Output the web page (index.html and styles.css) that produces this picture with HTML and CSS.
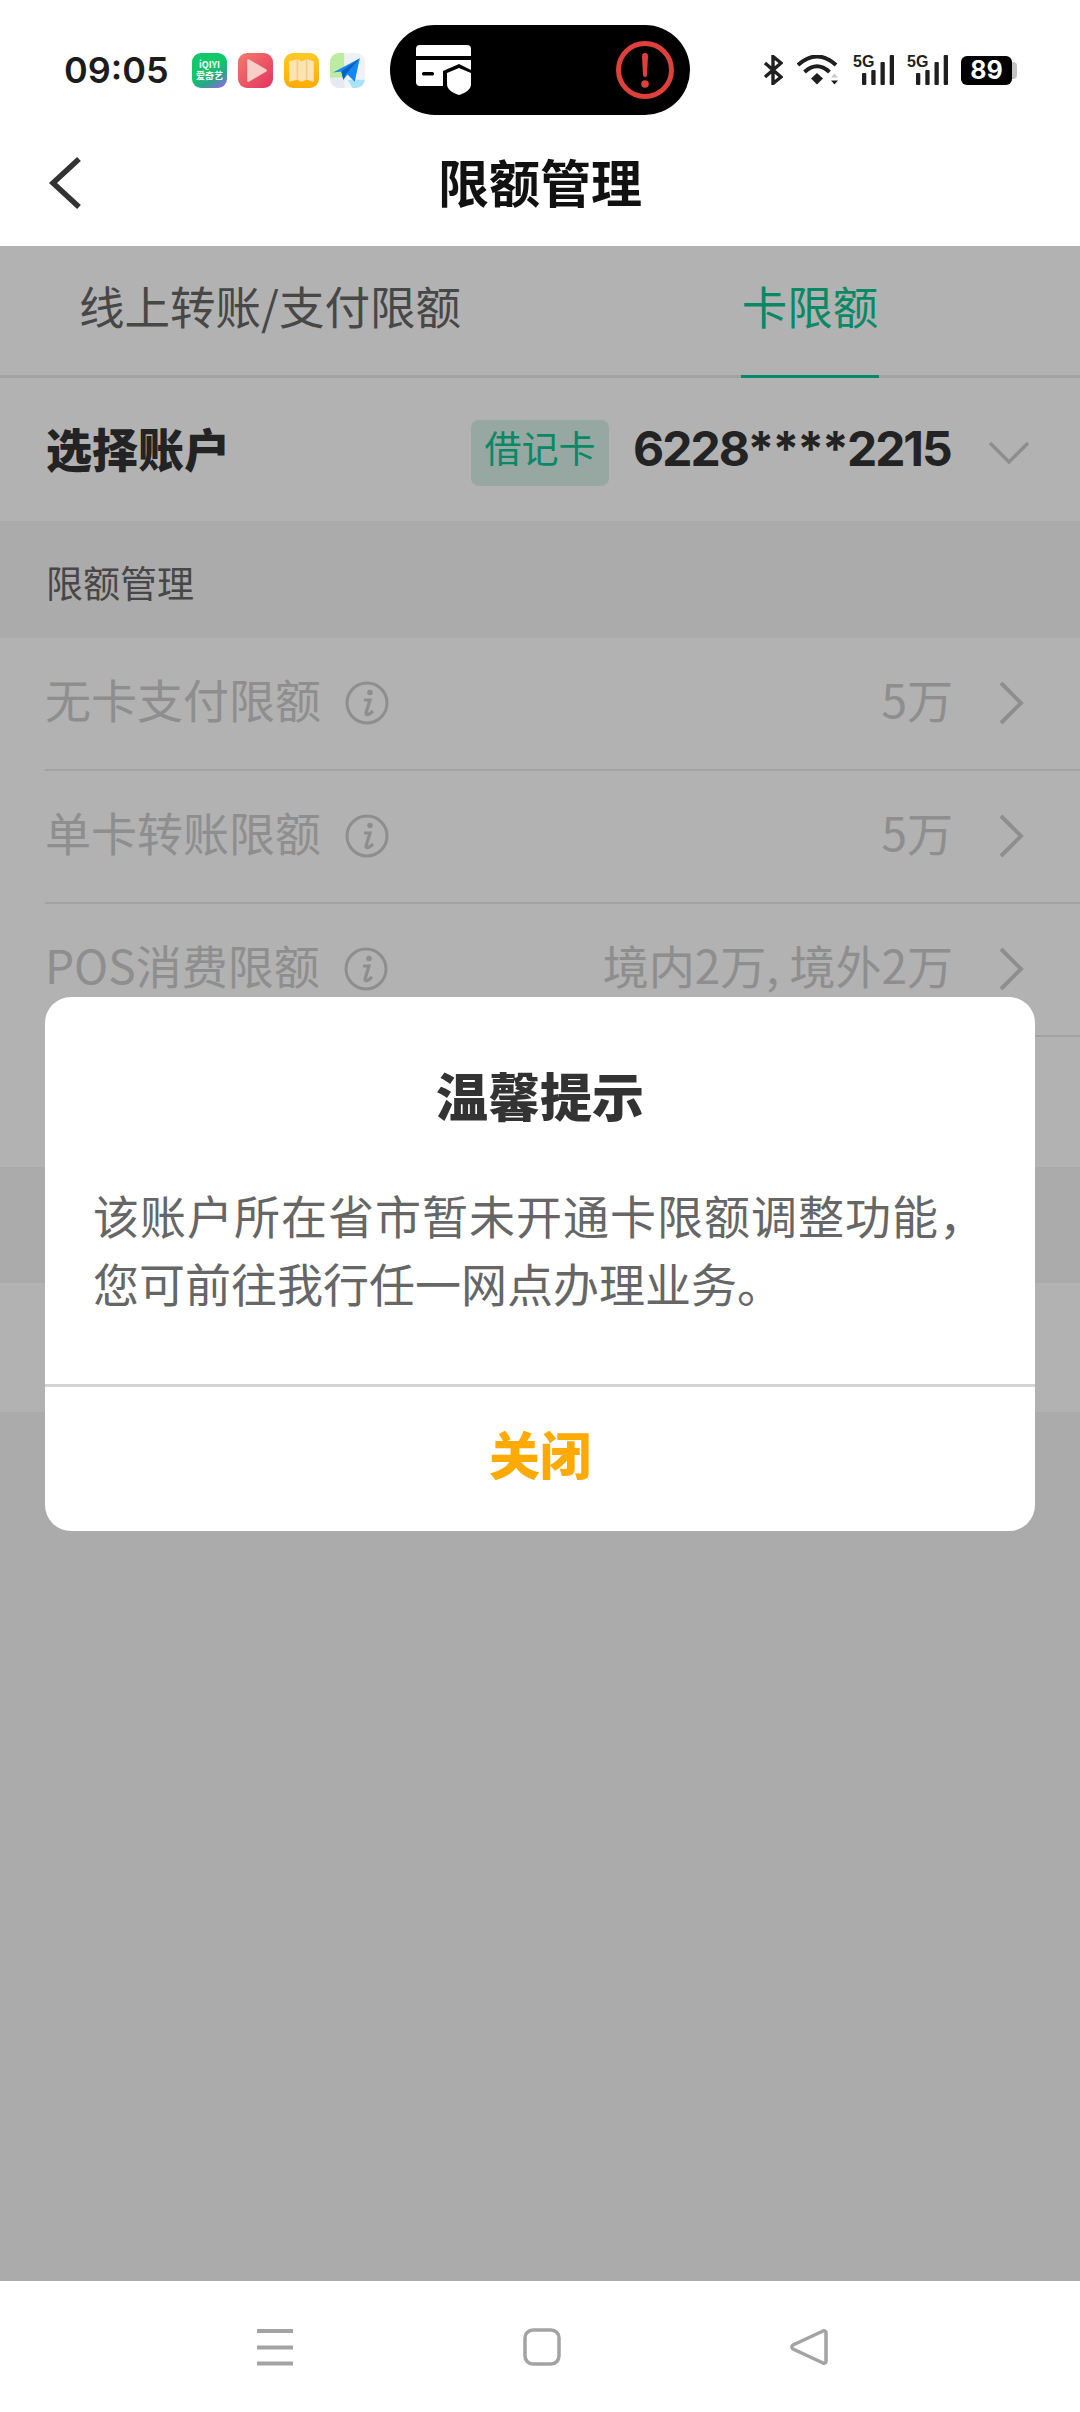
FILE: index.html
```html
<!DOCTYPE html>
<html lang="zh-CN">

<head>
    <meta charset="UTF-8">
    <meta name="viewport" content="width=device-width, initial-scale=1.0">
    <title>限额管理</title>
    <link rel="stylesheet" href="styles.css">
</head>

<body>
    <div class="phone">
        <header class="top">
            <div class="status">
                <span class="time">09:05</span>
                <div class="apps">
                    <div class="app app-iqiyi"><span>iQIYI</span><span>爱奇艺</span></div>
                    <div class="app app-video">
                        <svg viewBox="0 0 34 34"><path d="M10 7 27 17 10 27z" fill="#f8cfc8" stroke="#f8cfc8" stroke-width="2" stroke-linejoin="round"/></svg>
                    </div>
                    <div class="app app-book">
                        <svg viewBox="0 0 34 34"><path d="M5 8l8-2 4 2 5-2 7 2v20l-7-2-5 2-4-2-8 2z" fill="#fbe3b4"/><path d="M13 6v20M22 6v20" stroke="#f4cb85" stroke-width="1.500"/></svg>
                    </div>
                    <div class="app app-map">
                        <svg viewBox="0 0 34 34">
                            <path d="M0 5a5 5 0 0 1 5-5h9v24H0z" fill="#bdeb9f"/>
                            <path d="M14 0h15a5 5 0 0 1 5 5v20H14z" fill="#eef2f6"/>
                            <path d="M0 24h14v10H5a5 5 0 0 1-5-5z" fill="#e6e9f4"/>
                            <path d="M17 26h17v3a5 5 0 0 1-5 5h-7z" fill="#a9e2fb"/>
                            <path d="M3 19 29 5l-5 23-7-7-4 5-2-8z" fill="#1287f5"/>
                            <path d="M11 18 29 5 15 21l-2 5z" fill="#0b5fc0"/>
                        </svg>
                    </div>
                </div>
                <div class="pill">
                    <svg class="pill-card" viewBox="0 0 56 50">
                        <path d="M4 0h47a4 4 0 0 1 4 4v7H0V4a4 4 0 0 1 4-4z" fill="#fff"/>
                        <path d="M0 15h55v10L43 19 27 26v15H4a4 4 0 0 1-4-4z" fill="#fff"/>
                        <rect x="6" y="27" width="12" height="3.500" rx="1.500" fill="#000"/>
                        <path d="M43 23l12 5v11c0 6-6 9-12 11-6-2-12-5-12-11V28z" fill="#fff"/>
                    </svg>
                    <svg class="pill-alert" viewBox="0 0 58 58">
                        <circle cx="29" cy="29" r="26.500" fill="none" stroke="#e0403c" stroke-width="5"/>
                        <path d="M26 15a3 3 0 0 1 6 0l-1 19a2 2 0 0 1-4 0z" fill="#e0403c"/>
                        <circle cx="29" cy="43" r="3.800" fill="#e0403c"/>
                    </svg>
                </div>
                <div class="sys">
                    <svg class="sys-bt" viewBox="0 0 20 30"><path d="M2 8l16 14-8 6.500V1.500L18 8 2 22" fill="none" stroke="#1f1f1f" stroke-width="3.400"/></svg>
                    <svg class="sys-wifi" viewBox="0 0 42 30">
                        <path d="M1 10Q20 -7 39 10M7.500 17Q20 5.500 32.500 17" fill="none" stroke="#1f1f1f" stroke-width="4"/>
                        <path d="M20 18l6 5.500-6 6-6-6z" fill="#1f1f1f"/>
                        <path d="M37.500 18.500l3.500 4h-7z" fill="#c8c8c8"/>
                        <path d="M37.500 29.500l3.500-4h-7z" fill="#1f1f1f"/>
                    </svg>
                    <svg class="sys-signal" viewBox="0 -4 41 34">
                        <text x="0" y="12" class="sys-5g">5G</text>
                        <rect x="9" y="18" width="4.300" height="12" rx="1" fill="#1f1f1f"/>
                        <rect x="18.300" y="15" width="4.300" height="15" rx="1" fill="#1f1f1f"/>
                        <rect x="27.500" y="7" width="4.300" height="23" rx="1" fill="#1f1f1f"/>
                        <rect x="36.700" y="0" width="4.300" height="30" rx="1" fill="#1f1f1f"/>
                    </svg>
                    <svg class="sys-signal" viewBox="0 -4 41 34">
                        <text x="0" y="12" class="sys-5g">5G</text>
                        <rect x="9" y="18" width="4.300" height="12" rx="1" fill="#1f1f1f"/>
                        <rect x="18.300" y="15" width="4.300" height="15" rx="1" fill="#1f1f1f"/>
                        <rect x="27.500" y="7" width="4.300" height="23" rx="1" fill="#1f1f1f"/>
                        <rect x="36.700" y="0" width="4.300" height="30" rx="1" fill="#1f1f1f"/>
                    </svg>
                    <div class="battery"><span>89</span></div>
                </div>
            </div>
            <div class="titlebar">
                <svg class="back" viewBox="0 0 34 52"><path d="M31 2 5 26l26 24" fill="none" stroke="#333" stroke-width="5.500"/></svg>
                <h1>限额管理</h1>
            </div>
        </header>

        <main class="content">
            <div class="tabs">
                <div class="tab">线上转账/支付限额</div>
                <div class="tab tab-active"><span>卡限额</span></div>
            </div>

            <div class="account">
                <span class="account-label">选择账户</span>
                <span class="tag">借记卡</span>
                <span class="card-no">6228****2215</span>
                <svg class="arrow-down" viewBox="0 0 42 26"><path d="M2 3l19 19L40 3" fill="none" stroke="#ccc" stroke-width="3.500"/></svg>
            </div>

            <div class="section">限额管理</div>

            <div class="list">
                <div class="row">
                    <span class="row-name">无卡支付限额</span>
                    <svg class="info" viewBox="0 0 44 44"><circle cx="22" cy="22" r="20" fill="none" stroke="#ccc" stroke-width="3"/><circle cx="25" cy="11.500" r="2.800" fill="#ccc"/><path d="M19 19h6l-4 13c0 3 3 2 7-2" fill="none" stroke="#ccc" stroke-width="3.200"/></svg>
                    <span class="row-value">5万</span>
                    <svg class="arrow" viewBox="0 0 26 44"><path d="M3 2l20 20L3 42" fill="none" stroke="#ccc" stroke-width="4"/></svg>
                </div>
                <div class="row">
                    <span class="row-name">单卡转账限额</span>
                    <svg class="info" viewBox="0 0 44 44"><circle cx="22" cy="22" r="20" fill="none" stroke="#ccc" stroke-width="3"/><circle cx="25" cy="11.500" r="2.800" fill="#ccc"/><path d="M19 19h6l-4 13c0 3 3 2 7-2" fill="none" stroke="#ccc" stroke-width="3.200"/></svg>
                    <span class="row-value">5万</span>
                    <svg class="arrow" viewBox="0 0 26 44"><path d="M3 2l20 20L3 42" fill="none" stroke="#ccc" stroke-width="4"/></svg>
                </div>
                <div class="row">
                    <span class="row-name">POS消费限额</span>
                    <svg class="info" viewBox="0 0 44 44"><circle cx="22" cy="22" r="20" fill="none" stroke="#ccc" stroke-width="3"/><circle cx="25" cy="11.500" r="2.800" fill="#ccc"/><path d="M19 19h6l-4 13c0 3 3 2 7-2" fill="none" stroke="#ccc" stroke-width="3.200"/></svg>
                    <span class="row-value">境内2万, 境外2万</span>
                    <svg class="arrow" viewBox="0 0 26 44"><path d="M3 2l20 20L3 42" fill="none" stroke="#ccc" stroke-width="4"/></svg>
                </div>
                <div class="row-blank"></div>
            </div>

            <div class="section section-blank"></div>
            <div class="list-end"></div>

            <div class="mask">
                <div class="dialog">
                    <h2>温馨提示</h2>
                    <p>该账户所在省市暂未开通卡限额调整功能，您可前往我行任一网点办理业务。</p>
                    <div class="dialog-btn">关闭</div>
                </div>
            </div>
        </main>

        <nav class="navbar">
            <svg class="nav-icon" viewBox="0 0 38 38"><path d="M1 3h36M1 19.500h36M1 35.500h36" stroke="#a3a3a3" stroke-width="4"/></svg>
            <svg class="nav-icon" viewBox="0 0 38 38"><rect x="2" y="2" width="34" height="34" rx="8" fill="none" stroke="#a3a3a3" stroke-width="3.500"/></svg>
            <svg class="nav-icon" viewBox="0 0 38 38"><path d="M33 3 3 17c-1.500 1-1.500 3 0 4l30 14c1.500.5 3 0 3-1.500V4.500c0-1.500-1.500-2-3-1.500z" fill="none" stroke="#a3a3a3" stroke-width="3.500" stroke-linejoin="round"/></svg>
        </nav>
    </div>
</body>

</html>
```

FILE: styles.css
```css
* {
    margin: 0;
    padding: 0;
    box-sizing: border-box;
}

body {
    font-family: "Noto Sans CJK SC", "Noto Sans", sans-serif;
    background: #fff;
}

.phone {
    width: 1080px;
    height: 2412px;
    display: flex;
    flex-direction: column;
    overflow: hidden;
}

/* status bar + title */
.top {
    height: 246px;
    background: #fff;
}

.status {
    height: 140px;
    display: flex;
    align-items: center;
    padding-left: 64px;
}

.time {
    width: 128px;
    font-family: Inter, sans-serif;
    font-size: 36px;
    font-weight: 600;
    color: #1c1c1c;
}

.apps {
    display: flex;
    gap: 11px;
    width: 198px;
}

.app {
    width: 35px;
    height: 35px;
    border-radius: 9px;
    overflow: hidden;
}

.app svg {
    display: block;
    width: 35px;
    height: 35px;
}

.app-iqiyi {
    display: flex;
    flex-direction: column;
    align-items: center;
    justify-content: center;
    background: linear-gradient(150deg, #10c86a 45%, #2aa58a 70%, #a45cf0);
    color: #fff;
    font-size: 9px;
    font-weight: 700;
    line-height: 11px;
}

.app-video {
    background: linear-gradient(135deg, #f47a6c, #e23460);
}

.app-book {
    background: linear-gradient(180deg, #ffc928, #ffab00);
}

.app-map {
    background: #f2f4f6;
}

.pill {
    width: 300px;
    height: 90px;
    border-radius: 45px;
    background: #000;
    display: flex;
    align-items: center;
    justify-content: space-between;
    padding: 0 16px 0 26px;
}

.pill-card {
    width: 56px;
    height: 50px;
}

.pill-alert {
    width: 58px;
    height: 58px;
}

.sys {
    display: flex;
    align-items: center;
    margin-left: 73px;
}

.sys-bt {
    width: 20px;
    height: 30px;
    margin-right: 14px;
}

.sys-wifi {
    width: 42px;
    height: 30px;
    margin-right: 14px;
}

.sys-signal {
    width: 41px;
    height: 34px;
    margin-right: 13px;
    margin-bottom: 4px;
}

.sys-5g {
    font-family: "Liberation Sans", sans-serif;
    font-size: 16px;
    font-weight: 700;
    fill: #1f1f1f;
}

.battery {
    width: 51px;
    height: 29px;
    border-radius: 6px;
    background: #000;
    color: #fff;
    font-family: Inter, sans-serif;
    font-size: 25px;
    font-weight: 700;
    line-height: 29px;
    text-align: center;
    position: relative;
}

.battery::after {
    content: "";
    position: absolute;
    right: -5px;
    top: 6px;
    width: 5px;
    height: 17px;
    border-radius: 0 4px 4px 0;
    background: #c4c4c4;
}

.titlebar {
    height: 106px;
    padding: 0 0 20px 48px;
    display: flex;
    align-items: center;
    position: relative;
}

.back {
    width: 34px;
    height: 52px;
}

.titlebar h1 {
    position: absolute;
    left: 0;
    right: 0;
    top: 5px;
    text-align: center;
    font-size: 51px;
    font-weight: 700;
    line-height: 72px;
    color: #111;
}

/* page under the mask */
.content {
    flex: 1;
    position: relative;
    background: #f5f5f5;
}

.tabs {
    height: 132px;
    display: flex;
    background: #fff;
    border-bottom: 3px solid #e8e8e8;
}

.tab {
    flex: 1;
    height: 132px;
    line-height: 118px;
    text-align: center;
    font-size: 45.500px;
    color: #666;
}

.tab-active {
    color: #0cc592;
}

.tab-active span {
    display: inline-block;
    width: 138px;
    height: 132px;
    border-bottom: 3px solid #0cc592;
}

.account {
    height: 143px;
    display: flex;
    align-items: center;
    padding: 0 50px 0 46px;
    background: #fff;
}

.account-label {
    width: 425px;
    margin-top: -6px;
    font-size: 46px;
    font-weight: 900;
    color: #333;
}

.tag {
    width: 138px;
    height: 66px;
    margin-top: 7px;
    border-radius: 8px;
    background: #d9efe9;
    color: #0cc592;
    font-size: 37px;
    line-height: 54px;
    text-align: center;
}

.card-no {
    width: 354px;
    padding-left: 24px;
    margin-top: -2px;
    font-family: Inter, sans-serif;
    font-size: 48px;
    font-weight: 700;
    letter-spacing: -2px;
    color: #333;
}

.arrow-down {
    width: 42px;
    height: 26px;
    margin-left: 25px;
    margin-top: 6px;
}

.section {
    height: 117px;
    padding-left: 46px;
    line-height: 123px;
    font-size: 37px;
    color: #666;
}

.section-blank {
    height: 116px;
}

.list {
    padding-left: 45px;
    background: #fff;
}

.row {
    height: 133px;
    display: flex;
    align-items: center;
    padding-right: 56px;
    border-bottom: 2px solid #e8e8e8;
}

.row-blank {
    height: 130px;
}

.list-end {
    height: 129px;
    background: #fff;
}

.row-name {
    padding-bottom: 11px;
    font-size: 46px;
    color: #ccc;
}

.info {
    width: 44px;
    height: 44px;
    margin-left: 24px;
    margin-bottom: 2px;
}

.row-value {
    margin-left: auto;
    padding-bottom: 11px;
    font-size: 46px;
    color: #ccc;
}

.arrow {
    width: 26px;
    height: 44px;
    margin-left: 45px;
    margin-bottom: 2px;
}

/* dialog */
.mask {
    position: absolute;
    top: 0;
    right: 0;
    bottom: 0;
    left: 0;
    display: flex;
    align-items: center;
    justify-content: center;
    background: rgba(0, 0, 0, 0.3);
}

.dialog {
    width: 990px;
    height: 534px;
    border-radius: 26px;
    background: #fff;
    display: flex;
    flex-direction: column;
}

.dialog h2 {
    height: 172px;
    padding-top: 62px;
    text-align: center;
    font-size: 52px;
    font-weight: 900;
    line-height: 72px;
    color: #333;
}

.dialog p {
    height: 215px;
    padding: 11px 50px 0 48px;
    font-size: 46px;
    line-height: 68px;
    text-align: justify;
    color: #666;
}

.dialog-btn {
    flex: 1;
    border-top: 3px solid #d4d4d4;
    text-align: center;
    font-size: 51px;
    font-weight: 900;
    line-height: 132px;
    color: #ffaa00;
}

/* bottom nav */
.navbar {
    height: 131px;
    background: #fff;
    display: flex;
    align-items: center;
    justify-content: center;
    gap: 229px;
    padding-left: 4px;
}

.nav-icon {
    width: 38px;
    height: 38px;
}
```
